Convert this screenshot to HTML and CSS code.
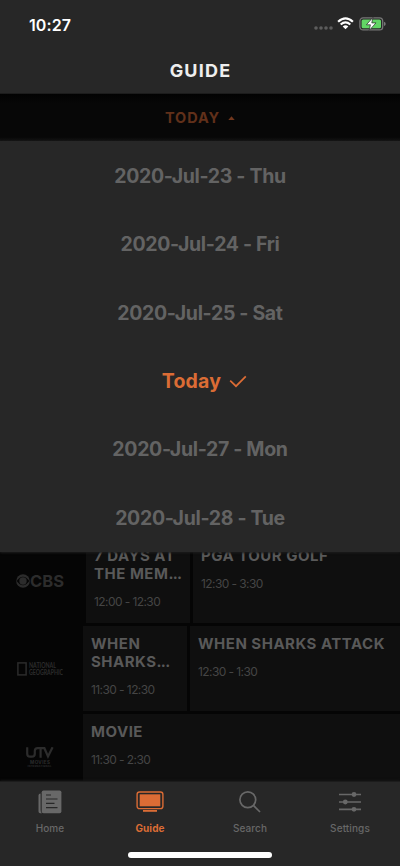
FILE: index.html
```html
<!DOCTYPE html>
<html lang="en">
<head>
<meta charset="utf-8">
<title>Guide</title>
<link rel="stylesheet" href="styles.css">
</head>
<body>
<div class="app">
  <header class="header">
    <div class="status">
      <span class="clock">10:27</span>
      <div class="indicators">
        <svg class="signal" width="19" height="4" viewBox="0 0 19 4"><circle cx="2" cy="2" r="1.8"/><circle cx="7" cy="2" r="1.8"/><circle cx="12" cy="2" r="1.8"/><circle cx="17" cy="2" r="1.8"/></svg>
        <svg class="wifi" width="17" height="13" viewBox="0 0 17 13"><path d="M1.1 4.8Q8.5-2 15.9 4.8M3.7 7.5Q8.5 3.2 13.3 7.5"/><path class="wifi-dot" d="M5.7 9.4Q8.5 7 11.3 9.4L8.5 12.3Z"/></svg>
        <svg class="battery" width="27" height="14" viewBox="0 0 27 14"><rect class="shell" x=".9" y=".9" width="22.8" height="12" rx="3.2"/><rect class="charge" x="2.6" y="2.5" width="19.4" height="8.8" rx="1.6"/><path class="tip" d="M25 4.7Q26.7 5.3 26.7 7T25 9.1Z"/><path class="bolt" d="M13.9 .4L7.4 7.8H11.4L10.2 13.4L17 5.9H12.8Z"/></svg>
      </div>
    </div>
    <h1 class="title">GUIDE</h1>
  </header>
  <div class="datebar"><span>TODAY</span><svg width="7" height="4" viewBox="0 0 7 4"><path d="M.3 4L3.5 .2L6.7 4Z"/></svg></div>
  <ul class="dates">
    <li>2020-Jul-23 - Thu</li>
    <li>2020-Jul-24 - Fri</li>
    <li>2020-Jul-25 - Sat</li>
    <li class="selected"><span>Today</span><svg width="18" height="13" viewBox="0 0 18 13"><path d="M1.2 5.6L7 11.2L16.8 1.3"/></svg></li>
    <li>2020-Jul-27 - Mon</li>
    <li>2020-Jul-28 - Tue</li>
  </ul>
  <main class="guide">
    <div class="row first">
      <div class="channel"><svg width="48" height="14" viewBox="0 0 48 14"><circle cx="7" cy="7" r="6.8"/><path class="eye" d="M.6 7Q7-1.5 13.4 7Q7 15.5 .6 7Z"/><circle cx="7" cy="7" r="3.7"/><text class="cbs" x="14" y="12.8" textLength="34" lengthAdjust="spacingAndGlyphs">CBS</text></svg></div>
      <div class="show half"><h2>7 DAYS AT<br>THE MEM<span class="dots">...</span></h2><p>12:00 - 12:30</p></div>
      <div class="show"><h2>PGA TOUR GOLF</h2><p>12:30 - 3:30</p></div>
    </div>
    <div class="row">
      <div class="channel"><svg width="46" height="14" viewBox="0 0 46 14"><rect class="frame" x=".9" y=".9" width="8.2" height="12"/><text class="natgeo" x="12" y="6.2" textLength="27" lengthAdjust="spacingAndGlyphs">NATIONAL</text><text class="natgeo" x="12" y="12.5" textLength="34" lengthAdjust="spacingAndGlyphs">GEOGRAPHIC</text></svg></div>
      <div class="show half"><h2>WHEN<br>SHARKS<span class="dots">...</span></h2><p>11:30 - 12:30</p></div>
      <div class="show"><h2>WHEN SHARKS ATTACK</h2><p>12:30 - 1:30</p></div>
    </div>
    <div class="row">
      <div class="channel utv"><svg width="28" height="20" viewBox="0 0 28 20"><path d="M1.2 .2V6.4Q1.2 9.7 4 9.7H6Q8.8 9.7 8.8 6.4V4Q8.8 1.2 11.6 1.2H18.4L22 9.5L26.6 .2M14.6 1.2V10.8"/><text class="movies" x="4" y="16.6" textLength="20">MOVIES</text><text class="intl" x="1.5" y="19.8" textLength="24">INTERNATIONAL</text></svg></div>
      <div class="show"><h2>MOVIE</h2><p>11:30 - 2:30</p></div>
    </div>
  </main>
  <footer class="footer">
    <nav class="tabs">
      <a class="tab home"><svg width="24" height="24" viewBox="0 0 24 24"><path d="M.5 5.3Q.5 3.6 2.6 3.6V20Q2.6 22.5 4 23.2H2.2Q.5 23.2 .5 21.4Z"/><rect x="3.7" y=".5" width="19.7" height="22.8" rx="1.8"/><path class="lines" d="M8 5H13M8 9H19.5M8 13.3H16.5M8 17.7H19.5"/></svg><span>Home</span></a>
      <a class="tab active"><svg width="28" height="24" viewBox="0 0 28 24"><rect class="outline" x="1.1" y="2" width="25.8" height="16.6" rx="2.4"/><rect x="3.7" y="4.3" width="20.6" height="12"/><path d="M7 20H21V21.8H7Z"/></svg><span>Guide</span></a>
      <a class="tab search"><svg width="24" height="24" viewBox="0 0 24 24"><circle class="outline" cx="9.8" cy="9.8" r="7.9"/><path class="outline" d="M15.4 15.4L22 22"/></svg><span>Search</span></a>
      <a class="tab settings"><svg width="24" height="24" viewBox="0 0 24 24"><path class="outline" d="M1 4.5H23M1 12H23M1 19.3H23"/><circle cx="16" cy="4.5" r="2.4"/><circle cx="7.3" cy="12" r="2.4"/><circle cx="16" cy="19.3" r="2.4"/></svg><span>Settings</span></a>
    </nav>
    <div class="home-bar"></div>
  </footer>
</div>
</body>
</html>
```
FILE: styles.css
```css
* { box-sizing: border-box; margin: 0; padding: 0; }
body { background: #050505; font-family: Inter, "Open Sans", sans-serif; }
svg { display: block; flex: none; }
.app { width: 400px; height: 866px; display: flex; flex-direction: column; overflow: hidden; }
.header { height: 94px; flex: none; background: #272727; color: #fff; border-bottom: 1px solid #1c1c1c; }
.status { height: 48px; display: flex; justify-content: space-between; padding: 15px 14.5px 0 29px; }
.clock { font-size: 16px; font-weight: 600; line-height: 20px; letter-spacing: .1px; }
.indicators { display: flex; gap: 4.5px; padding-top: 2px; }
.signal { fill: #5d5d5d; margin-top: 9px; }
.wifi { fill: none; stroke: #fff; stroke-width: 2.2; }
.wifi-dot { fill: #fff; stroke: none; }
.shell { fill: none; stroke: #777; stroke-width: 1.3; }
.charge { fill: #62d565; }
.tip { fill: #777; }
.bolt { fill: #fff; stroke: #272727; stroke-width: .7; }
.title { font-size: 18px; line-height: 22px; font-weight: 700; text-align: center; margin-top: 12px; color: #eee; letter-spacing: 1.2px; text-indent: 1px; }
.datebar { height: 47px; flex: none; display: flex; align-items: center; justify-content: center; gap: 8px; background: linear-gradient(#020202, #070707 20%, #070707 92%, #151515); color: #61301a; font-size: 14.5px; font-weight: 700; letter-spacing: .9px; }
.datebar svg { fill: #72371d; }
.dates { height: 411px; flex: none; list-style: none; display: grid; grid-template-rows: repeat(6, 1fr); background: #272727; color: #636363; font-size: 19.5px; font-weight: 700; letter-spacing: -.33px; position: relative; box-shadow: 0 1px 2px #1c1c1c; padding-top: 1px; }
.dates li { display: flex; align-items: center; justify-content: center; white-space: nowrap; }
.dates .selected { color: #db6c35; gap: 8px; padding-left: 9px; letter-spacing: .2px; }
.selected svg { fill: none; stroke: #db6c35; stroke-width: 1.7; }
.guide { height: 229px; flex: none; overflow: hidden; display: flex; flex-direction: column; gap: 3px; background: #050505; }
.row { height: 85px; flex: none; display: flex; gap: 3px; }
.first { margin-top: -14px; }
.channel { width: 80px; flex: none; display: flex; align-items: center; justify-content: center; fill: #2c2c2c; }
.first .channel { width: 83px; padding-right: 3px; }
.utv { padding: 0; }
.show { flex: 1; min-width: 0; background: #0f0f0f; padding: 9px 8px; white-space: nowrap; }
.half { flex: none; width: 104px; }
.show h2 { font-size: 15px; line-height: 18px; font-weight: 700; color: #595959; letter-spacing: .5px; }
.dots { letter-spacing: -.7px; }
.show p { font-size: 12px; line-height: 16px; margin-top: 11px; color: #454545; letter-spacing: -.58px; }
.eye { fill: #050505; }
.cbs { font: 700 16.5px Inter, sans-serif; }
.frame { fill: none; stroke: #2c2c2c; stroke-width: 1.5; }
.natgeo { font: 700 6.8px Lato, sans-serif; }
.utv path { fill: none; stroke: #2c2c2c; stroke-width: 2.2; }
.movies { font: 700 4.6px Inter, sans-serif; }
.intl { font: 700 2.7px Inter, sans-serif; }
.footer { height: 85px; flex: none; background: #272727; border-top: 1px solid #1c1c1c; display: flex; flex-direction: column; align-items: center; position: relative; box-shadow: 0 -1px 2px #151515; }
.tabs { width: 400px; height: 70px; display: grid; grid-template-columns: repeat(4, 1fr); }
.tab { display: flex; flex-direction: column; align-items: center; gap: 7px; padding-top: 8px; color: #686868; fill: #686868; font-size: 10px; line-height: 14px; font-weight: 500; letter-spacing: .1px; }
.active { color: #db6c35; fill: #db6c35; font-weight: 700; }
.outline { fill: none; stroke: #686868; stroke-width: 1.7; }
.active .outline { stroke: #db6c35; stroke-width: 1.4; }
.lines { stroke: #272727; stroke-width: 1.2; }
.home-bar { width: 144px; height: 6px; border-radius: 3px; background: #fff; }
```
